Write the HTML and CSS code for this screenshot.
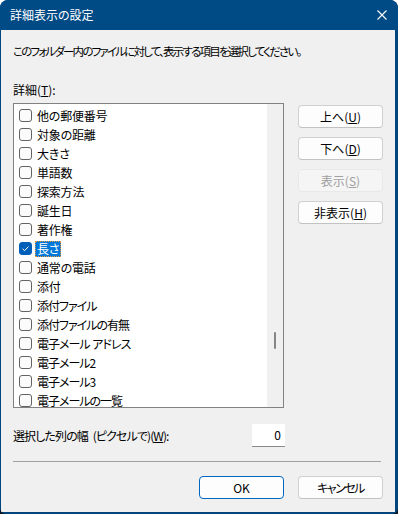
FILE: index.html
```html
<!DOCTYPE html>
<html lang="ja">
<head>
<meta charset="utf-8">
<title>詳細表示の設定</title>
<link rel="stylesheet" href="styles.css">
</head>
<body>
<div class="window">
  <div class="titlebar">
    <span class="title">詳細表示の設定</span>
    <svg class="close" width="10" height="10" viewBox="0 0 10 10"><path d="M0.5 0.5 L9.5 9.5 M9.5 0.5 L0.5 9.5" stroke="#fff" stroke-width="1.1" fill="none"/></svg>
  </div>
  <div class="body">
    <p class="intro">このフォルダー内のファイルに対して、表示する項目を選択してください。</p>
    <p class="label">詳細(<u>T</u>):</p>
    <div class="main">
      <div class="list">
        <div class="rows">
          <div class="row"><span class="cb"></span><span class="txt">他の郵便番号</span></div>
          <div class="row"><span class="cb"></span><span class="txt">対象の距離</span></div>
          <div class="row"><span class="cb"></span><span class="txt">大きさ</span></div>
          <div class="row"><span class="cb"></span><span class="txt">単語数</span></div>
          <div class="row"><span class="cb"></span><span class="txt">探索方法</span></div>
          <div class="row"><span class="cb"></span><span class="txt">誕生日</span></div>
          <div class="row"><span class="cb"></span><span class="txt">著作権</span></div>
          <div class="row"><span class="cb checked"><svg width="13" height="13" viewBox="0 0 13 13"><path d="M3.6 6.8 L5.6 8.7 L9.4 4.6" stroke="#fff" stroke-width="1" fill="none"/></svg></span><span class="txt sel">長さ</span></div>
          <div class="row"><span class="cb"></span><span class="txt">通常の電話</span></div>
          <div class="row"><span class="cb"></span><span class="txt">添付</span></div>
          <div class="row"><span class="cb"></span><span class="txt kana">添付ファイル</span></div>
          <div class="row"><span class="cb"></span><span class="txt kana">添付ファイルの有無</span></div>
          <div class="row"><span class="cb"></span><span class="txt kana">電子メール アドレス</span></div>
          <div class="row"><span class="cb"></span><span class="txt kana">電子メール2</span></div>
          <div class="row"><span class="cb"></span><span class="txt kana">電子メール3</span></div>
          <div class="row"><span class="cb"></span><span class="txt kana">電子メールの一覧</span></div>
        </div>
        <div class="scrollbar"><div class="thumb"></div></div>
      </div>
      <div class="buttons">
        <div class="btn">上へ(<u>U</u>)</div>
        <div class="btn">下へ(<u>D</u>)</div>
        <div class="btn disabled">表示(<u>S</u>)</div>
        <div class="btn">非表示(<u>H</u>)</div>
      </div>
    </div>
    <div class="width-row">
      <span class="wlabel">選択した列の幅 (ピクセルで)(<u>W</u>):</span>
      <div class="input">0</div>
    </div>
    <div class="sep"></div>
    <div class="footer">
      <div class="btn default">OK</div>
      <div class="btn"><span class="cancel">キャンセル</span></div>
    </div>
  </div>
</div>
</body>
</html>
```

FILE: styles.css
```css
html, body {
  margin: 0;
  padding: 0;
}
body {
  background: linear-gradient(#ffffff 0, #ffffff 50%, #101820 50%);
  font-family: "Noto Sans CJK JP", "Noto Sans", sans-serif;
  font-size: 12px;
  color: #000;
  font-feature-settings: "palt";
}
.window {
  width: 398px;
  height: 514px;
  display: flex;
  flex-direction: column;
  border-radius: 8px 8px 6px 6px;
  overflow: hidden;
  background: #00467d;
}
.titlebar {
  height: 30px;
  flex: none;
  background: #004a85;
  display: flex;
  align-items: center;
  justify-content: space-between;
  padding: 0 11px 0 10px;
}
.title {
  color: #fff;
  font-size: 12px;
  line-height: 16px;
}
.close {
  display: block;
}
.body {
  flex: none;
  width: 370px;
  height: 482px;
  background: #f0f0f0;
  margin-left: 1px;
  padding: 0 12px;
  display: flex;
  flex-direction: column;
}
p {
  margin: 0;
}
.intro {
  margin-top: 13px;
  line-height: 16px;
  white-space: nowrap;
  font-size: 11.5px;
  letter-spacing: -1.8px;
}
.label {
  margin-top: 23px;
  line-height: 16px;
}
.main {
  margin-top: 5px;
  display: flex;
  gap: 14px;
}
.list {
  width: 269px;
  height: 303px;
  border: 1px solid #828282;
  background: #fff;
  display: flex;
}
.rows {
  flex: 1;
  overflow: hidden;
  padding: 2px 0 0 5px;
}
.row {
  height: 19px;
  display: flex;
  align-items: center;
  gap: 5px;
  white-space: nowrap;
}
.cb {
  width: 11px;
  height: 11px;
  border: 1px solid #636363;
  border-radius: 3px;
  background: #fbfbfb;
  flex: none;
  position: relative;
}
.cb.checked {
  background: #005fb8;
  border-color: #005fb8;
}
.cb.checked svg {
  position: absolute;
  left: -1px;
  top: -1px;
}
.txt {
  line-height: 16px;
  letter-spacing: -0.2px;
}
.txt.kana {
  letter-spacing: -1px;
  word-spacing: 1px;
}
.sel {
  background: #0078d7;
  color: #fff;
  padding: 0 2px;
  margin-left: -2px;
  outline: 1px dotted #e79a3c;
  outline-offset: -1px;
}
.scrollbar {
  width: 16px;
  background: #f0f0f0;
  flex: none;
}
.thumb {
  width: 2px;
  height: 17px;
  margin: 228px 0 0 7px;
  background: #858585;
  border-radius: 1px;
}
.buttons {
  margin-top: 2px;
  display: flex;
  flex-direction: column;
  gap: 9px;
}
.btn {
  width: 83px;
  height: 21px;
  border: 1px solid #d0d0d0;
  border-bottom-color: #c2c2c2;
  border-radius: 4px;
  background: #fdfdfd;
  display: flex;
  align-items: center;
  justify-content: center;
  line-height: 16px;
}
.btn.disabled {
  background: #f5f5f5;
  border-color: #e8e8e8;
  color: #a0a0a0;
}
.btn.default {
  border-color: #0067c0;
}
.cancel {
  letter-spacing: -1.5px;
}
.width-row {
  margin-top: 16px;
  width: 272px;
  display: flex;
  align-items: center;
  justify-content: space-between;
}
.wlabel {
  line-height: 16px;
  letter-spacing: -0.9px;
  word-spacing: 3px;
}
.input {
  width: 29px;
  height: 22px;
  background: #fff;
  border-bottom: 1px solid #8a8a8a;
  text-align: right;
  padding-right: 4px;
  line-height: 22px;
}
.sep {
  margin-top: 14px;
  width: 368px;
  height: 1px;
  background: #a0a0a0;
}
.footer {
  margin-top: 14px;
  display: flex;
  justify-content: flex-end;
  gap: 14px;
}
```
